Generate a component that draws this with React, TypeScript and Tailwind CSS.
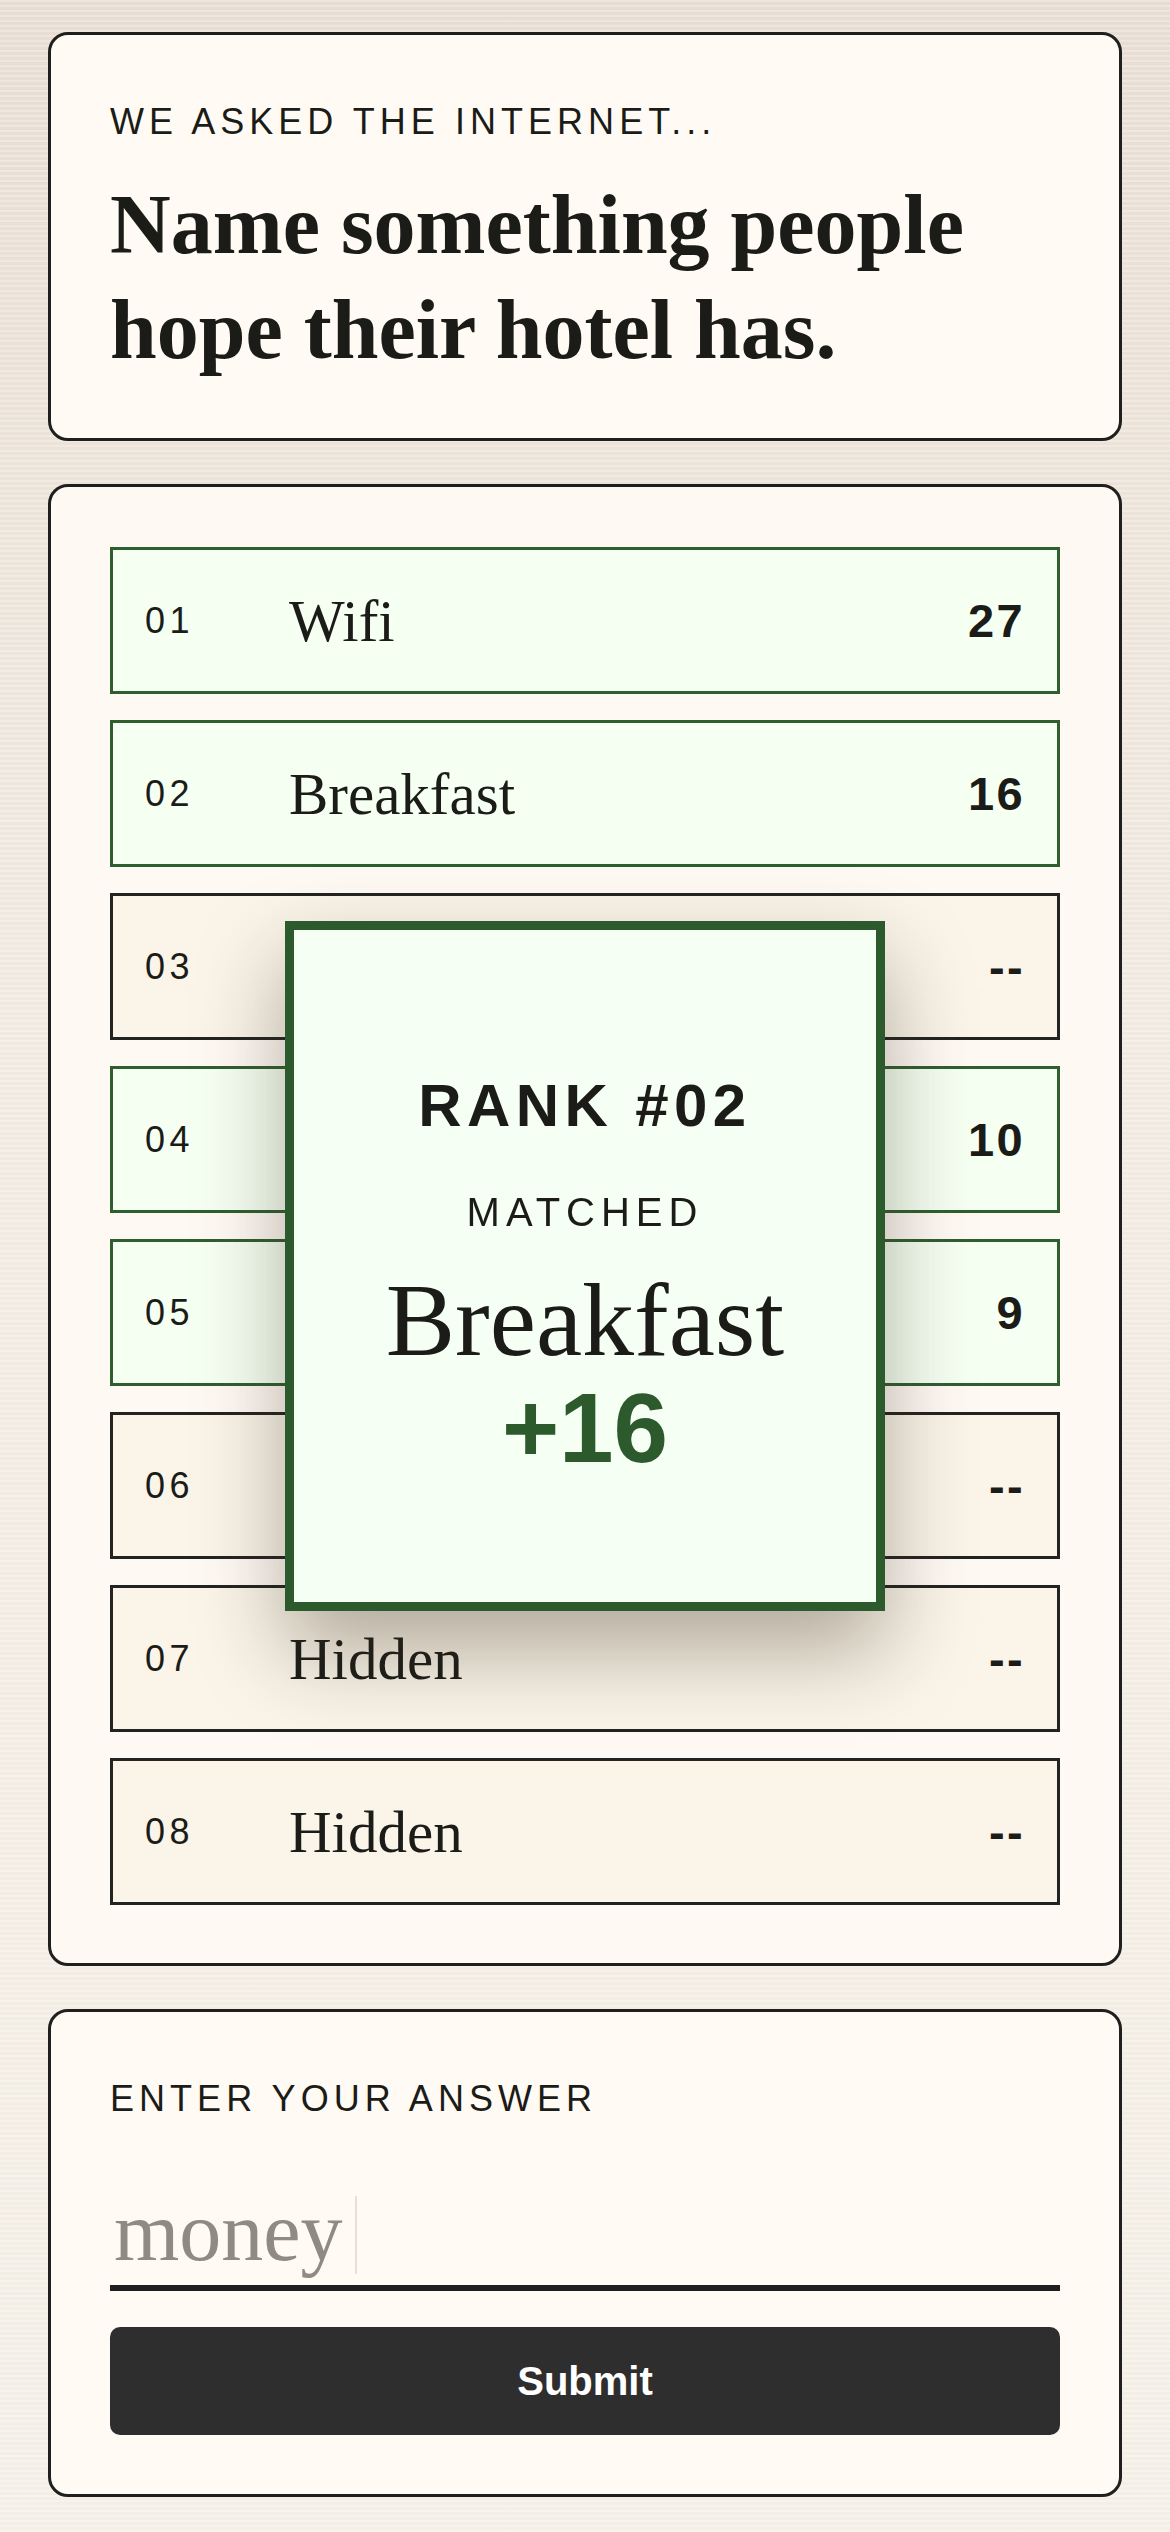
const rows = [
  { no: "01", answer: "Wifi", score: "27", found: true },
  { no: "02", answer: "Breakfast", score: "16", found: true },
  { no: "03", answer: "Hidden", score: "--", found: false },
  { no: "04", answer: "Pool", score: "10", found: true },
  { no: "05", answer: "Parking", score: "9", found: true },
  { no: "06", answer: "Hidden", score: "--", found: false },
  { no: "07", answer: "Hidden", score: "--", found: false },
  { no: "08", answer: "Hidden", score: "--", found: false },
];

const Row = ({ no, answer, score, found }: (typeof rows)[number]) => {
  return (
    <div
      className={`flex h-[147px] shrink-0 items-center border-[3px] pl-[32px] pr-[32px] ${
        found ? "border-[#2f5e2f] bg-[#f5fff2]" : "border-[#232321] bg-[#faf4e9]"
      }`}
    >
      <span className="w-[144px] shrink-0 text-[36px] leading-[40px] tracking-[0.125em]">{no}</span>
      <span className="flex-1 font-['Liberation_Serif','Times_New_Roman',serif] text-[59px] leading-[70px]">
        {answer}
      </span>
      <span className="text-[47px] font-bold leading-[52px] tracking-[0.05em]">{score}</span>
    </div>
  );
};

const App = () => {
  return (
    <div className="flex min-h-[2532px] w-full flex-col gap-[43px] bg-[image:repeating-linear-gradient(180deg,rgba(255,255,255,0.28)_0px,rgba(255,255,255,0.28)_2px,transparent_2px,transparent_5px),linear-gradient(180deg,#e8ddd2_0%,#f0e9e0_40%,#f4efe6_100%)] px-[48px] pt-[32px] pb-[35px] font-['Liberation_Sans',Arial,sans-serif] text-[#1b1b18]">
      {/* question */}
      <section className="rounded-[20px] border-[3px] border-[#1f1f1d] bg-[#fffbf4] px-[59px] pt-[67px] pb-[56px]">
        <p className="text-[36px] leading-[40px] tracking-[0.14em] uppercase">We asked the internet...</p>
        <h1 className="mt-[30px] font-['Liberation_Serif','Times_New_Roman',serif] text-[84px] font-bold leading-[105px]">
          Name something people hope their hotel has.
        </h1>
      </section>

      {/* board */}
      <section className="flex flex-col gap-[26px] rounded-[20px] border-[3px] border-[#1f1f1d] bg-[#fff9f4] px-[59px] pt-[60px] pb-[58px]">
        {rows.map((r) => (
          <Row key={r.no} {...r} />
        ))}
      </section>

      {/* answer */}
      <section className="rounded-[20px] border-[3px] border-[#1f1f1d] bg-[#fffaf3] px-[59px] pt-[67px] pb-[59px]">
        <p className="text-[36px] leading-[40px] tracking-[0.14em] uppercase">Enter your answer</p>
        <div className="mt-[65px] flex items-center border-b-[6px] border-[#1f1f1f] pb-[5px]">
          <span className="pl-[4px] font-['Liberation_Serif','Times_New_Roman',serif] text-[84px] leading-[96px] text-[#8f8a83]">
            money
          </span>
          <span className="mt-[6px] ml-[12px] h-[78px] w-[2px] bg-[#e6dfd7]" />
        </div>
        <button className="mt-[36px] flex h-[108px] w-full items-center justify-center rounded-[10px] bg-[#2e2e2e] text-[40px] font-bold text-white">
          Submit
        </button>
      </section>

      {/* match popup */}
      <div className="pointer-events-none fixed inset-0 flex items-center justify-center">
        <div className="flex h-[690px] w-[600px] flex-col items-center justify-center border-[9px] border-[#2d5a2d] bg-[#f5fff3] pt-[19px] shadow-[0_40px_80px_rgba(60,50,30,0.38)]">
          <p className="text-[60px] font-bold leading-[66px] tracking-[0.09em]">RANK #02</p>
          <p className="mt-[50px] text-[40px] leading-[46px] tracking-[0.15em]">MATCHED</p>
          <p className="mt-[30px] font-['Liberation_Serif','Times_New_Roman',serif] text-[104px] leading-[110px]">
            Breakfast
          </p>
          <p className="mt-[3px] text-[98px] font-bold leading-[100px] text-[#2d5a2d]">+16</p>
        </div>
      </div>
    </div>
  );
};

export default App;
